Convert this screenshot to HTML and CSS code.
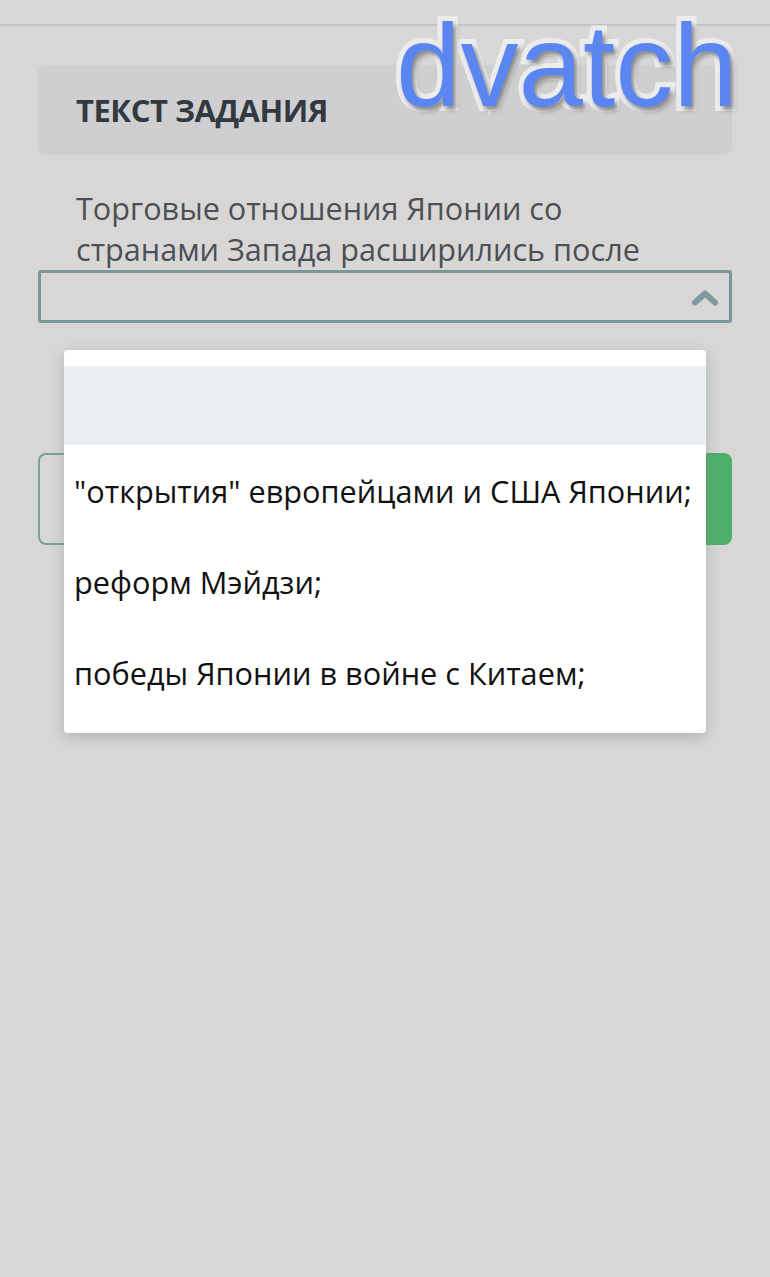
FILE: index.html
```html
<!DOCTYPE html>
<html lang="ru">
<head>
<meta charset="utf-8">
<link rel="stylesheet" href="styles.css">
</head>
<body>
<div class="topbar"></div>
<main class="main">
  <div class="task-head">ТЕКСТ ЗАДАНИЯ</div>
  <p class="question">Торговые отношения Японии со странами Запада расширились после</p>
  <div class="select">
    <svg class="chev" width="30" height="20" viewBox="0 0 30 20"><path d="M5 15.5 L15 6.5 L25 15.5" fill="none" stroke="#7d9a9f" stroke-width="6" stroke-linecap="round" stroke-linejoin="round"/></svg>
  </div>
  <div class="actions">
    <div class="btn-outline"></div>
    <div class="btn-green"></div>
  </div>
</main>
<ul class="dropdown">
  <li class="opt opt-empty"></li>
  <li class="opt">"открытия" европейцами и США Японии;</li>
  <li class="opt">реформ Мэйдзи;</li>
  <li class="opt">победы Японии в войне с Китаем;</li>
</ul>
<div class="watermark">dvatch</div>
</body>
</html>
```
FILE: styles.css
```css
html, body {
  margin: 0;
  padding: 0;
}
body {
  background: #d8d7d6;
  font-family: "Open Sans", "Noto Sans", sans-serif;
  width: 770px;
  height: 1277px;
  overflow: hidden;
  position: relative;
}
.topbar {
  height: 24px;
  border-bottom: 2px solid #c3c3c3;
  background: #d9d8d7;
}
.main {
  padding: 0 38px;
}
.task-head {
  margin-top: 39px;
  height: 90px;
  background: #cfcfd1;
  border-radius: 8px;
  padding-left: 38px;
  display: flex;
  align-items: center;
  font-weight: 700;
  font-size: 31px;
  color: #323940;
  letter-spacing: -0.5px;
}
.question {
  margin: 33px 0 0;
  padding-left: 38px;
  font-size: 30.6px;
  line-height: 41px;
  color: #4b5056;
  padding-right: 50px;
}
.select {
  height: 47px;
  border: 3px solid #789799;
  border-radius: 3px;
  display: flex;
  align-items: center;
  justify-content: flex-end;
  padding-right: 9px;
}
.chev {
  display: block;
}
.actions {
  margin-top: 130px;
  display: flex;
  gap: 80px;
  height: 92px;
}
.btn-outline {
  flex: 1;
  border: 2px solid #7a9e98;
  border-radius: 8px;
}
.btn-green {
  flex: 1;
  background: linear-gradient(90deg, #5fa872, #4caf68);
  border-radius: 8px;
}
.dropdown {
  position: absolute;
  top: 350px;
  left: 64px;
  width: 642px;
  margin: 0;
  padding: 16px 0 15px;
  list-style: none;
  background: #fff;
  border-radius: 4px;
  box-shadow: 0 4px 14px rgba(120, 140, 140, 0.45);
}
.opt {
  height: 91px;
  display: flex;
  align-items: center;
  padding-left: 10px;
  font-size: 30.7px;
  color: #111;
  white-space: nowrap;
}
.opt-empty {
  height: 79px;
  background: #e8eef0;
}
.watermark {
  position: absolute;
  top: 0;
  left: 396px;
  font-family: "Liberation Sans", Arial, sans-serif;
  font-size: 116px;
  line-height: 1.15;
  color: #5b86f2;
  -webkit-text-stroke: 10px #ececec;
  paint-order: stroke fill;
  text-shadow: 3px 4px 4px rgba(60, 60, 60, 0.55);
}
```
